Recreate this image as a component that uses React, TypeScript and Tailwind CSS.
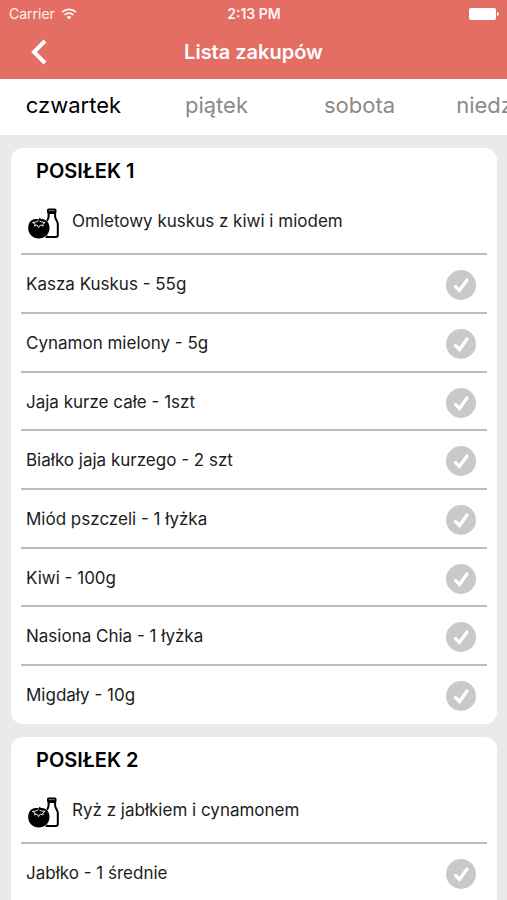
import { useState } from "react";

type Meal = { title: string; dish: string; items: string[] };

const days = ["czwartek", "piątek", "sobota", "niedziela"];

const meals: Meal[] = [
  {
    title: "POSIŁEK 1",
    dish: "Omletowy kuskus z kiwi i miodem",
    items: [
      "Kasza Kuskus - 55g",
      "Cynamon mielony - 5g",
      "Jaja kurze całe - 1szt",
      "Białko jaja kurzego - 2 szt",
      "Miód pszczeli - 1 łyżka",
      "Kiwi - 100g",
      "Nasiona Chia - 1 łyżka",
      "Migdały - 10g",
    ],
  },
  {
    title: "POSIŁEK 2",
    dish: "Ryż z jabłkiem i cynamonem",
    items: ["Jabłko - 1 średnie"],
  },
];

function StatusBar() {
  return (
    <div className="grid h-[27px] grid-cols-3 items-center pr-2 pl-[9px] text-[14px]">
      <div className="flex items-center gap-[6px] text-white/90">
        <span>Carrier</span>
        <svg width="16" height="12" viewBox="0 0 16 12" fill="none" stroke="currentColor" strokeWidth="1.7" aria-label="Wi-Fi">
          <path d="M1 4.2C5 .3 11 .3 15 4.2" />
          <path d="M3.6 6.9c2.5-2.4 6.3-2.4 8.8 0" />
          <path d="M8 11.4 5.5 8.9c1.4-1.3 3.6-1.3 5 0z" fill="currentColor" stroke="none" />
        </svg>
      </div>
      <span className="text-center font-semibold text-white/95">2:13 PM</span>
      <svg className="justify-self-end" width="30" height="12" viewBox="0 0 30 12" fill="currentColor" aria-label="Bateria">
        <rect width="27" height="12" rx="2" />
        <path d="M28 4c2.4.6 2.4 3.4 0 4z" />
      </svg>
    </div>
  );
}

function FoodIcon() {
  return (
    <svg width="31" height="31" viewBox="0 0 31 31" aria-hidden="true">
      <rect x="19" y="0.5" width="9.5" height="5" rx="1.6" />
      <path d="M20.7 2.6h6" stroke="#aaa" strokeWidth=".7" />
      <path
        d="M20.6 5v3.500c0 2.500-2.300 4.500-2.300 7.500v13h9.500c1.300 0 2-.8 2-2V16c0-3-2.700-5-2.700-7.500V5z"
        fill="white"
        stroke="black"
        strokeWidth="2"
        strokeLinejoin="round"
      />
      <path
        d="M10.700 11.500c6.400-2 10.800 2.200 10.800 8.500 0 6.200-4.700 10.500-10.700 10.500S.2 26.200.2 20c0-6.300 4.400-10.500 10.500-8.500z"
        stroke="white"
        strokeWidth="1"
        paintOrder="stroke"
      />
      <path
        d="M4.500 14.500 8 14l2.700-1.500L13.500 14l3.700.3-2.400 1.800.4 1.900-2.800-1-1.800 2.600L9 17l-2.500 1 .6-2z"
        fill="black"
        stroke="white"
        strokeWidth=".9"
        strokeLinejoin="round"
      />
      <path d="m11 13 1-3" stroke="black" strokeWidth="1.500" />
    </svg>
  );
}

function ItemRow({ name }: { name: string }) {
  return (
    <li className="h-[59px] border-t-2 border-[#bdbdbd] nth-[3n]:h-[58px]">
      <label className="flex h-full items-center justify-between pt-[3px] pr-[11px] pl-[5px]">
        <span>{name}</span>
        <span className="grid size-[30px] place-items-center rounded-full bg-[#c9c9c9] has-checked:bg-[#e56e64]">
          <input type="checkbox" className="col-start-1 row-start-1 size-[30px] appearance-none rounded-full" />
          <svg className="pointer-events-none col-start-1 row-start-1" width="30" height="30" viewBox="0 0 30 30" fill="none" stroke="white" strokeWidth="3.200" aria-hidden="true">
            <path d="m9.500 16.500 4 4L21 10" strokeLinecap="round" />
          </svg>
        </span>
      </label>
    </li>
  );
}

function MealCard({ meal }: { meal: Meal }) {
  return (
    <section className="shrink-0 rounded-xl bg-white px-[10px] pb-px last:grow last:rounded-b-none">
      <h2 className="px-[15px] pt-[9px] text-[20px] leading-[28px] font-semibold text-black">{meal.title}</h2>
      <div className="flex h-[68px] items-center gap-[13px] pl-[7px]">
        <div className="pt-[9px]">
          <FoodIcon />
        </div>
        <p className="pt-[6px]">{meal.dish}</p>
      </div>
      <ul>
        {meal.items.map((item) => (
          <ItemRow key={item} name={item} />
        ))}
      </ul>
    </section>
  );
}

export default function App() {
  const [active, setActive] = useState(0);
  return (
    <div className="flex h-screen flex-col overflow-hidden bg-[#eaeaea] font-['Inter','Liberation_Sans',sans-serif] text-[17px] text-[#1c1c1c]">
      <header className="shrink-0 bg-[#e56e64] text-white">
        <StatusBar />
        <div className="grid h-[52px] grid-cols-[48px_1fr_48px] items-center pb-[2px]">
          <button type="button" aria-label="Wstecz" className="justify-self-end">
            <svg width="18" height="26" viewBox="0 0 18 26" fill="none" stroke="currentColor" strokeWidth="4">
              <path d="M15 2 4 13l11 11" />
            </svg>
          </button>
          <h1 className="text-center text-[20px] font-semibold">Lista zakupów</h1>
        </div>
      </header>
      <nav className="flex h-[56px] shrink-0 overflow-hidden bg-white pb-1 pl-[2px]">
        {days.map((day, i) => (
          <button
            key={day}
            type="button"
            onClick={() => setActive(i)}
            className={i === active ? "w-[143px] shrink-0 text-[22px] text-black" : "w-[143px] shrink-0 text-[22px] text-[#8a8a8a]"}
          >
            {day}
          </button>
        ))}
      </nav>
      <main className="flex min-h-0 flex-1 flex-col gap-[13px] overflow-hidden pt-[13px] pr-[10px] pl-[11px]">
        {meals.map((meal) => (
          <MealCard key={meal.title} meal={meal} />
        ))}
      </main>
    </div>
  );
}
